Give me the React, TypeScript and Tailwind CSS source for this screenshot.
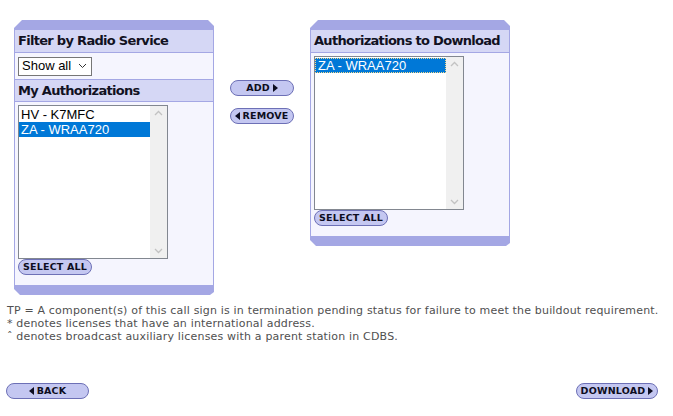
const CAP = "bg-[#a4a7e4]";

function Pill({ children, className = "" }: { children: React.ReactNode; className?: string }) {
  return (
    <button
      className={`flex h-[16px] items-center justify-center rounded-full border border-[#6d70b6] bg-[#c4c7f1] text-[9.5px] font-bold leading-none tracking-[0.2px] text-[#0d0d20] ${className}`}
    >
      {children}
    </button>
  );
}

const Tri = ({ dir }: { dir: "l" | "r" }) => (
  <svg width="5" height="8" viewBox="0 0 5 8" className="shrink-0">
    {dir === "r" ? <path d="M0 0 L5 4 L0 8 Z" fill="#0d0d20" /> : <path d="M5 0 L0 4 L5 8 Z" fill="#0d0d20" />}
  </svg>
);

function Scrollbar() {
  return (
    <div className="flex w-[17px] flex-col items-center justify-between bg-[#f0f0f0] py-[4px]">
      <svg width="9" height="6" viewBox="0 0 9 6">
        <path d="M1 5 L4.5 1.5 L8 5" stroke="#c2c2c2" strokeWidth="1.3" fill="none" />
      </svg>
      <svg width="9" height="6" viewBox="0 0 9 6">
        <path d="M1 1 L4.5 4.5 L8 1" stroke="#c2c2c2" strokeWidth="1.3" fill="none" />
      </svg>
    </div>
  );
}

function ListBox({ items, selected, focus }: { items: string[]; selected: string; focus?: boolean }) {
  return (
    <div className="flex h-[154px] w-[150px] border border-[#828790] bg-white font-['Liberation_Sans',Arial,sans-serif] text-[13px] leading-[15px]">
      <div className="flex-1 pt-[1px]">
        {items.map((it) =>
          it === selected ? (
            <div
              key={it}
              className={`bg-[#0078d7] pl-[2px] text-white ${focus ? "border border-dotted border-[#f5d98a] leading-[13px] pl-[1px]" : ""}`}
            >
              {it}
            </div>
          ) : (
            <div key={it} className="pl-[2px] text-black">
              {it}
            </div>
          )
        )}
      </div>
      <Scrollbar />
    </div>
  );
}

function Panel({ children }: { children: React.ReactNode }) {
  return (
    <div className="flex w-[200px] flex-col">
      <div
        className={`h-[10px] ${CAP} [clip-path:polygon(8px_0,calc(100%-6px)_0,100%_6px,100%_100%,0_100%,0_8px)]`}
      />
      <div className="flex flex-col border-x border-[#a4a7e4] bg-[#f5f5fe] pb-[10px]">{children}</div>
      <div
        className={`h-[10px] ${CAP} [clip-path:polygon(0_0,100%_0,100%_calc(100%-3px),calc(100%-4px)_100%,6px_100%,0_calc(100%-6px))]`}
      />
    </div>
  );
}

function Header({ children, top }: { children: React.ReactNode; top?: boolean }) {
  return (
    <div
      className={`flex h-[23px] items-center whitespace-nowrap border-b border-[#a4a7e4] bg-[#d5d7f5] pl-[3px] text-[13px] font-bold tracking-[-0.7px] text-[#111122] ${top ? "" : "border-t"}`}
    >
      {children}
    </div>
  );
}

export default function App() {
  return (
    <div className="min-h-screen w-[673px] bg-white font-['DejaVu_Sans',Verdana,sans-serif]">
      <div className="flex items-start pl-[14px] pt-[20px]">
        <Panel>
          <Header top>Filter by Radio Service</Header>
          <div className="flex h-[26px] items-center pl-[3px]">
            <div className="flex h-[19px] w-[74px] items-center justify-between border border-[#767676] bg-white pl-[3px] pr-[4px] font-['Liberation_Sans',Arial,sans-serif] text-[13px] text-black">
              <span>Show all</span>
              <svg width="9" height="6" viewBox="0 0 9 6">
                <path d="M1 1 L4.5 4.5 L8 1" stroke="#333" strokeWidth="1" fill="none" />
              </svg>
            </div>
          </div>
          <Header>My Authorizations</Header>
          <div className="flex flex-col pl-[3px] pt-[3px]">
            <ListBox items={["HV - K7MFC", "ZA - WRAA720"]} selected="ZA - WRAA720" />
            <Pill className="w-[74px]">SELECT ALL</Pill>
          </div>
        </Panel>

        <div className="ml-[16px] mt-[60px] flex w-[64px] flex-col gap-[12px]">
          <Pill className="w-[64px] gap-[3px]">
            ADD <Tri dir="r" />
          </Pill>
          <Pill className="w-[64px] gap-[2px]">
            <Tri dir="l" />
            REMOVE
          </Pill>
        </div>

        <div className="ml-[16px]">
          <Panel>
            <Header top>Authorizations to Download</Header>
            <div className="flex flex-col pl-[3px] pt-[3px]">
              <ListBox items={["ZA - WRAA720"]} selected="ZA - WRAA720" focus />
              <Pill className="w-[74px]">SELECT ALL</Pill>
            </div>
          </Panel>
        </div>
      </div>

      <div className="mt-[9px] pl-[7px] text-[11px] leading-[13px] tracking-[0.18px] text-[#505050]">
        <p>TP = A component(s) of this call sign is in termination pending status for failure to meet the buildout requirement.</p>
        <p>* denotes licenses that have an international address.</p>
        <p>ˆ denotes broadcast auxiliary licenses with a parent station in CDBS.</p>
      </div>

      <div className="mt-[40px] flex justify-between pl-[6px] pr-[15px]">
        <Pill className="w-[83px] gap-[3px]">
          <Tri dir="l" />
          BACK
        </Pill>
        <Pill className="w-[82px] gap-[3px]">
          DOWNLOAD <Tri dir="r" />
        </Pill>
      </div>
    </div>
  );
}
